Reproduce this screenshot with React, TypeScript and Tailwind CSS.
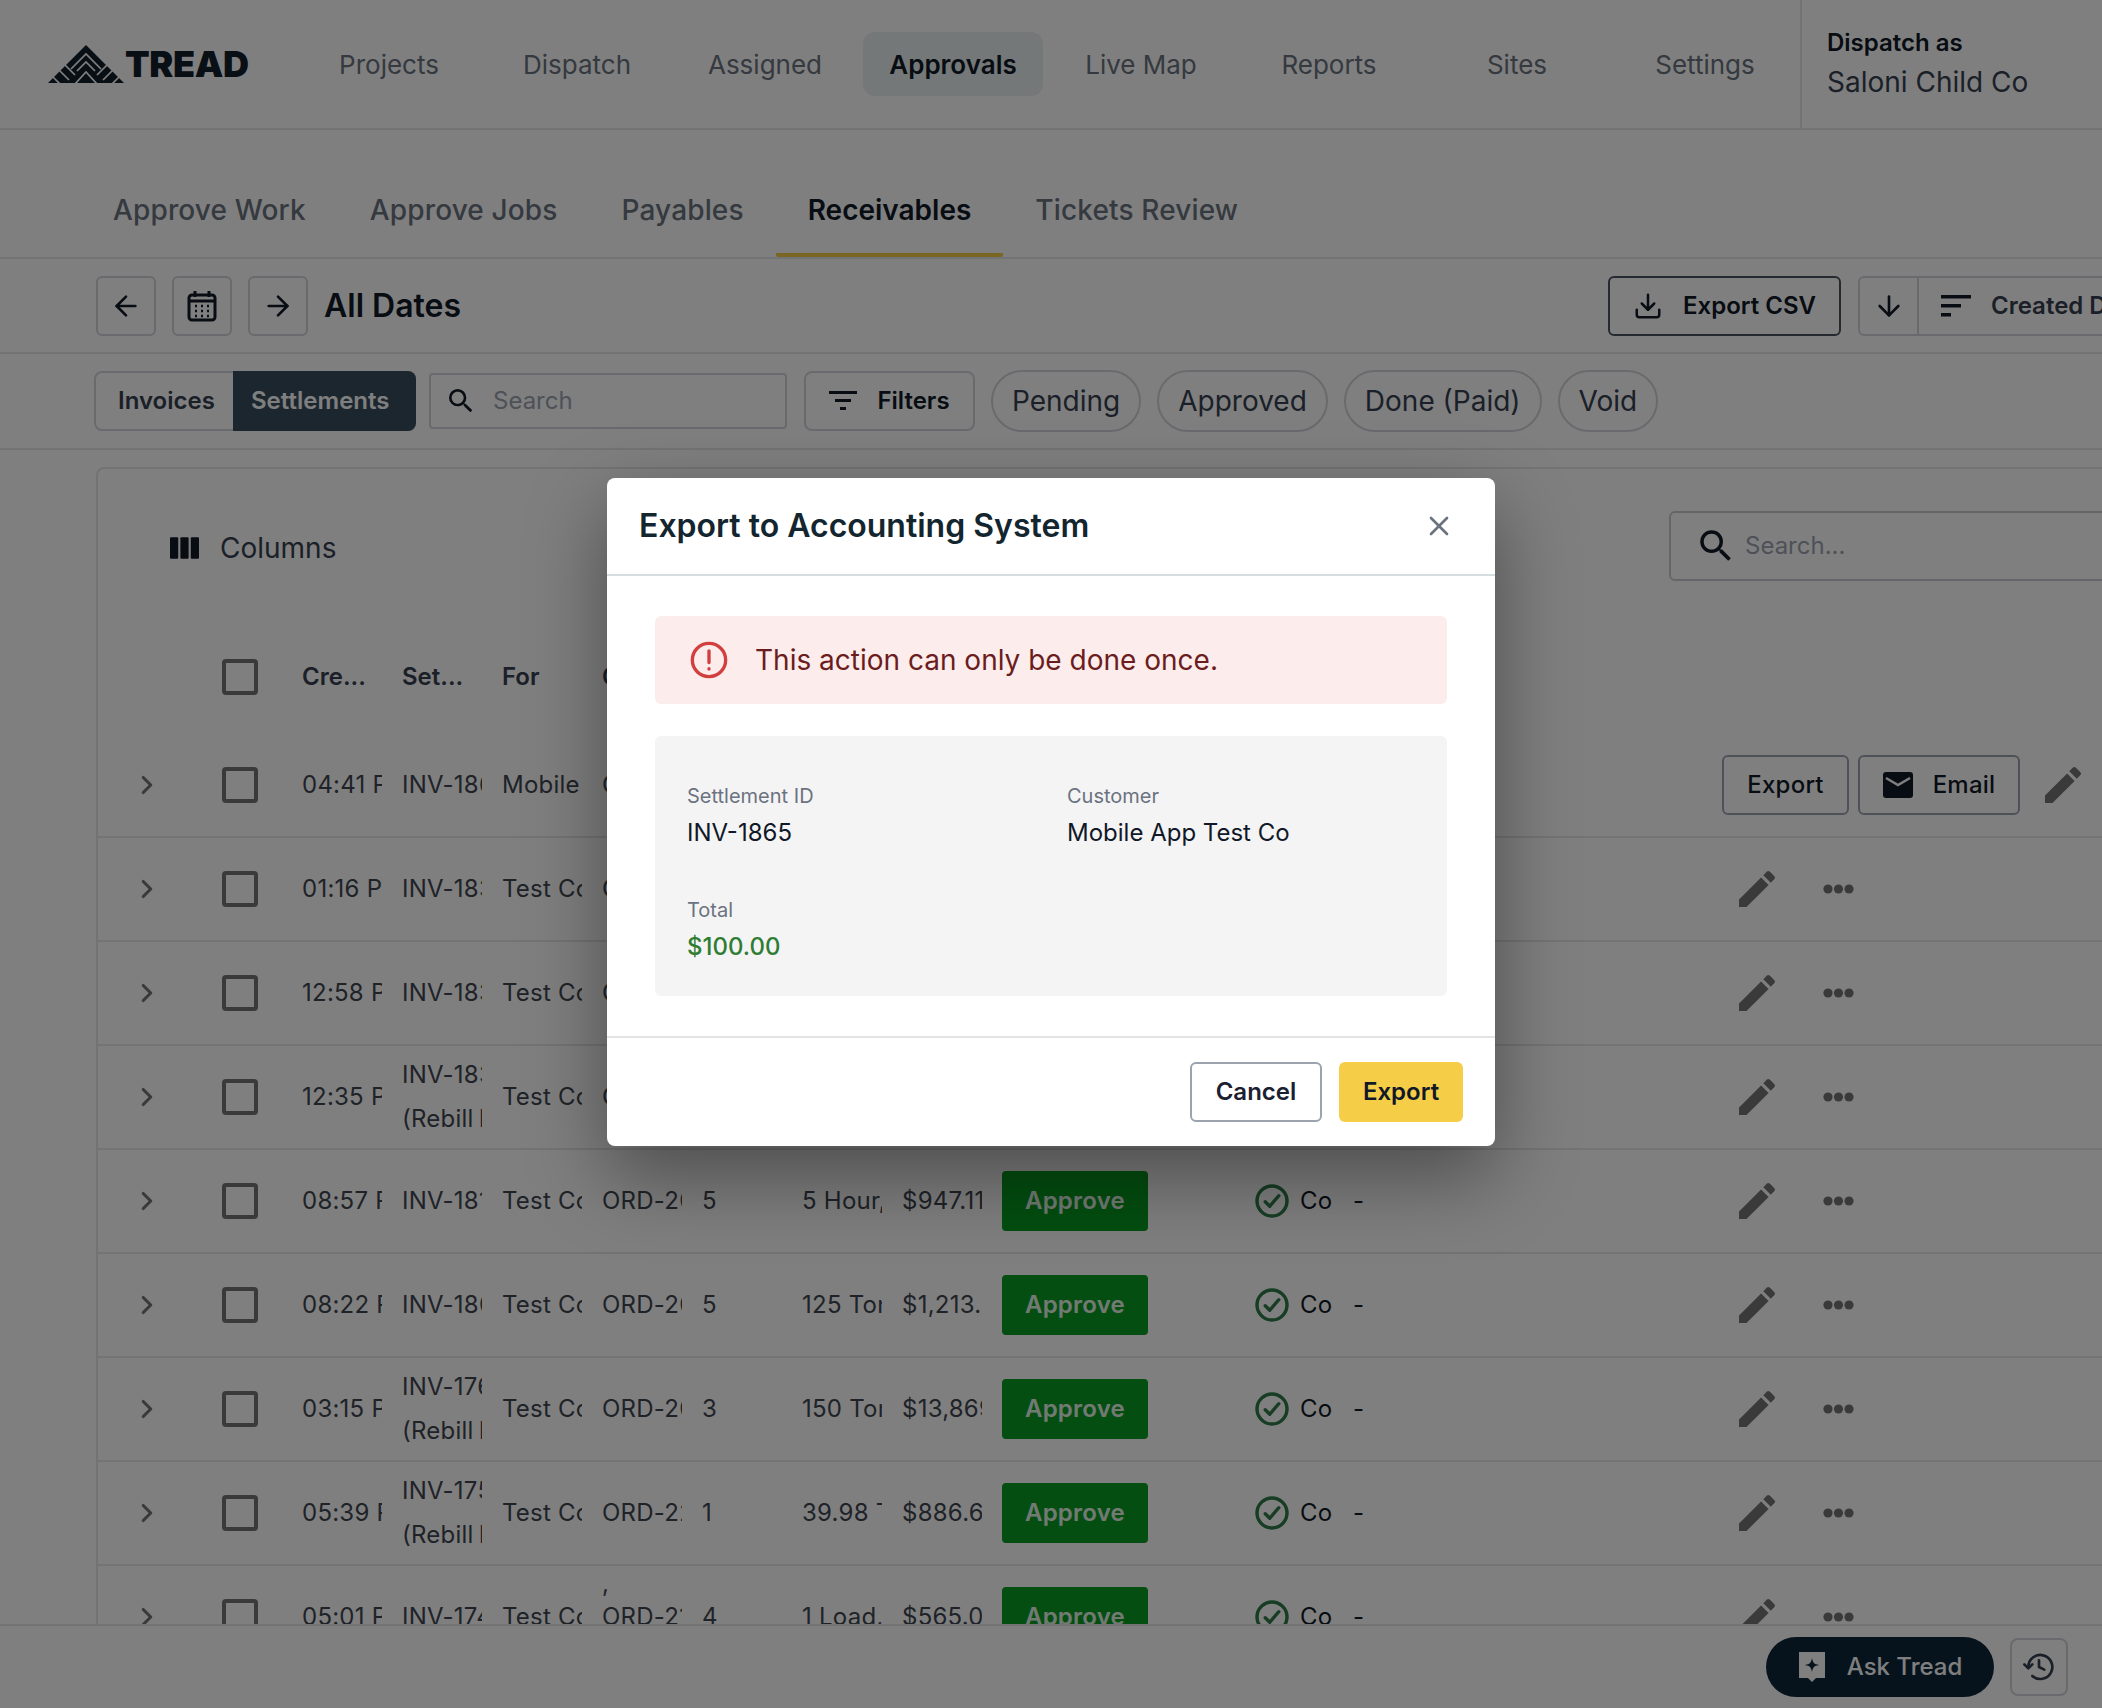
import { ArrowLeft, ArrowRight, ArrowDown, Download, X, ChevronRight } from 'lucide-react';

const navItems = ['Projects', 'Dispatch', 'Assigned', 'Approvals', 'Live Map', 'Reports', 'Sites', 'Settings'];
const tabs = ['Approve Work', 'Approve Jobs', 'Payables', 'Receivables', 'Tickets Review'];
const pills = ['Pending', 'Approved', 'Done (Paid)', 'Void'];

const rows = [
  { time: '04:41 PM', id: 'INV-1865', forName: 'Mobile App', order: 'ORD-2', n: '', qty: '', total: '', first: true },
  { time: '01:16 PM', id: 'INV-1832', forName: 'Test Co', order: 'ORD-2', n: '', qty: '', total: '' },
  { time: '12:58 PM', id: 'INV-1831', forName: 'Test Co', order: 'ORD-2', n: '', qty: '', total: '' },
  { time: '12:35 PM', id: 'INV-1830', rebill: true, forName: 'Test Co', order: 'ORD-2', n: '', qty: '', total: '' },
  { time: '08:57 PM', id: 'INV-1817', forName: 'Test Co', order: 'ORD-2046', n: '5', qty: '5 Hour, 2 Load', total: '$947.11', approve: true },
  { time: '08:22 PM', id: 'INV-1806', forName: 'Test Co', order: 'ORD-2041', n: '5', qty: '125 Tons', total: '$1,213.50', approve: true },
  { time: '03:15 PM', id: 'INV-1766', rebill: true, forName: 'Test Co', order: 'ORD-2011', n: '3', qty: '150 Tons', total: '$13,869.00', approve: true },
  { time: '05:39 PM', id: 'INV-1755', rebill: true, forName: 'Test Co', order: 'ORD-2231', n: '1', qty: '39.98 Tons', total: '$886.60', approve: true },
  { time: '05:01 PM', id: 'INV-1744', forName: 'Test Co', order: 'ORD-2177', n: '4', qty: '1 Load, 2 Tons', total: '$565.00', approve: true, comma: true },
];

const Logo = () => (
  <div className="flex items-center">
    <svg width="76" height="38" viewBox="0 0 76 38">
      <path d="M38 0 L76 38 L0 38 Z" fill="#13202b" />
      <g fill="none" stroke="#fff" strokeWidth="1.7">
        <path d="M23 24 L38 9 L53 24" />
        <path d="M29 26 L38 17 L47 26" />
        <path d="M27 39 L38 27 L49 39" />
        <path d="M16 19 L27 30" />
        <path d="M11 25 L21 35" />
        <path d="M5 32 L12 39" />
        <path d="M60 19 L49 30" />
        <path d="M65 25 L55 35" />
        <path d="M71 32 L64 39" />
      </g>
    </svg>
    <span className="ml-[1px] text-[36px] leading-none font-black text-[#13202b] tracking-[-0.01em]">TREAD</span>
  </div>
);

const SearchIcon = ({ size }: { size: number }) => (
  <svg width={size} height={size} viewBox="0 0 24 24" fill="#111827">
    <path d="M15.5 14h-.79l-.28-.27A6.47 6.47 0 0 0 16 9.5 6.5 6.5 0 1 0 9.5 16c1.61 0 3.09-.59 4.23-1.57l.27.28v.79l5 4.99L20.49 19l-4.99-5zm-6 0C7.01 14 5 11.99 5 9.5S7.01 5 9.5 5 14 7.01 14 9.5 11.99 14 9.5 14z" />
  </svg>
);

const CheckBox = () => <div className="w-[36px] h-[36px] shrink-0 rounded-[4px] border-[4px] border-[#757575]" />;

const PencilIcon = () => (
  <svg width="48" height="48" viewBox="0 0 24 24" fill="#757575">
    <path d="M3 17.25V21h3.75L17.81 9.94l-3.75-3.75L3 17.25zM20.71 7.04a1 1 0 0 0 0-1.41l-2.34-2.34a1 1 0 0 0-1.41 0l-1.83 1.83 3.75 3.75 1.83-1.83z" />
  </svg>
);

const Dots = () => (
  <svg width="31" height="10" viewBox="0 0 31 10" fill="#757575">
    <circle cx="5" cy="5" r="4.6" />
    <circle cx="15.5" cy="5" r="4.6" />
    <circle cx="26" cy="5" r="4.6" />
  </svg>
);

const CheckCircle = () => (
  <svg width="36" height="36" viewBox="0 0 24 24" fill="none" stroke="#2e7d4a" strokeWidth="2.3" strokeLinecap="round" strokeLinejoin="round">
    <circle cx="12" cy="12" r="10" />
    <path d="M7.5 12.5l3 3 6-7" />
  </svg>
);

const Cell = ({ children }: { children?: React.ReactNode }) => (
  <div className="w-[80px] shrink-0 overflow-hidden whitespace-nowrap">{children}</div>
);

const Row = ({ row }: { row: (typeof rows)[number] }) => (
  <div className="relative flex items-center h-[104px] shrink-0 border-b-2 border-[#e5e7eb] text-[24px] text-[#3f4650] tracking-[0.01em] pl-[34px]">
    <ChevronRight className="w-[30px] h-[30px] text-[#757575] shrink-0" strokeWidth={2.5} />
    <div className="ml-[60px] shrink-0">
      <CheckBox />
    </div>
    <div className="ml-[44px] flex items-center gap-[20px]">
      <Cell>{row.time}</Cell>
      <Cell>
        {row.rebill ? (
          <div className="leading-[44px]">
            <div>{row.id}</div>
            <div className="[word-spacing:-2px]">(Rebill Invoice)</div>
          </div>
        ) : (
          row.id
        )}
      </Cell>
      <Cell>{row.forName}</Cell>
      <Cell>
        {row.comma ? (
          <div className="relative h-[102px] flex items-center">
            <span className="absolute left-0 top-0">,</span>
            {row.order}
          </div>
        ) : (
          row.order
        )}
      </Cell>
      <Cell>{row.n}</Cell>
      <Cell>{row.qty}</Cell>
      <Cell>{row.total}</Cell>
    </div>
    {row.approve && (
      <div className="ml-[20px] flex items-center">
        <button className="w-[146px] h-[60px] rounded-[4px] bg-[#069c20] text-white/90 font-semibold text-[24px]">Approve</button>
        <div className="ml-[106px]">
          <CheckCircle />
        </div>
        <span className="ml-[10px] w-[34px] overflow-hidden text-[#111827]">Co</span>
        <span className="ml-[19px] text-[#111827]">-</span>
      </div>
    )}
    {row.first ? (
      <div className="absolute right-[15px] top-0 bottom-0 flex items-center">
        <button className="w-[127px] h-[60px] rounded-[6px] border-2 border-[#9ca3af] font-medium text-[#111827]">Export</button>
        <button className="ml-[9px] w-[162px] h-[60px] rounded-[6px] border-2 border-[#9ca3af] font-medium text-[#111827] flex items-center justify-center gap-[20px]">
          <svg width="30" height="26" viewBox="0 0 30 26" fill="#111827">
            <rect width="30" height="26" rx="3" />
            <path d="M3 6l12 7 12-7" fill="none" stroke="#fff" strokeWidth="2.5" />
          </svg>
          Email
        </button>
        <div className="ml-[19px]">
          <PencilIcon />
        </div>
      </div>
    ) : (
      <div className="absolute right-[248px] top-0 bottom-0 flex items-center gap-[42px]">
        <PencilIcon />
        <Dots />
      </div>
    )}
  </div>
);

const App = () => {
  return (
    <div className="relative w-[2102px] h-[1708px] overflow-hidden bg-white font-['Inter',sans-serif]">
      <div className="flex flex-col h-full">
        {/* Top nav */}
        <header className="flex h-[130px] shrink-0 border-b-2 border-[#e5e7eb]">
          <div className="w-[299px] shrink-0 pl-[48px] flex items-center">
            <Logo />
          </div>
          <nav className="flex items-center gap-[8px]">
            {navItems.map((item) => (
              <div
                key={item}
                className={
                  item === 'Approvals'
                    ? 'w-[180px] h-[64px] flex items-center justify-center rounded-[12px] bg-[#e9f0f1] text-[#111827] text-[26px] font-semibold'
                    : 'w-[180px] h-[64px] flex items-center justify-center text-[26px] text-[#6b7280]'
                }
              >
                {item}
              </div>
            ))}
          </nav>
          <div className="ml-[5px] pl-[25px] flex-1 border-l-2 border-[#e5e7eb] flex flex-col justify-center gap-[6px]">
            <div className="text-[24px] leading-[30px] font-semibold text-[#111827]">Dispatch as</div>
            <div className="text-[28px] leading-[36px] text-[#374151]">Saloni Child Co</div>
          </div>
        </header>

        {/* Sub tabs */}
        <div className="flex h-[129px] shrink-0 items-end border-b-2 border-[#e5e7eb] pl-[81px]">
          {tabs.map((tab) => (
            <div
              key={tab}
              className={
                tab === 'Receivables'
                  ? 'h-[96px] px-[32px] pt-[6px] flex items-center text-[28px] font-semibold text-[#111827] border-b-4 border-[#f4cb45] rounded-b-[2px]'
                  : 'h-[96px] px-[32px] pt-[6px] flex items-center text-[28px] tracking-[0.005em] font-medium text-[#6b7280] border-b-4 border-transparent'
              }
            >
              {tab}
            </div>
          ))}
        </div>

        {/* Date bar */}
        <div className="flex h-[95px] shrink-0 items-center border-b-2 border-[#e5e7eb] pl-[96px]">
          <div className="flex items-center gap-[16px] shrink-0">
            <button className="w-[60px] h-[60px] rounded-[6px] border-2 border-[#d1d5db] flex items-center justify-center">
              <ArrowLeft className="w-[32px] h-[32px] text-[#111827]" />
            </button>
            <button className="w-[60px] h-[60px] rounded-[6px] border-2 border-[#d1d5db] flex items-center justify-center">
              <svg width="30" height="32" viewBox="0 0 30 32" fill="none" stroke="#111827" strokeWidth="3">
                <rect x="2" y="5" width="26" height="25" rx="3" />
                <path d="M2 11h26M8 1v6M22 1v6" />
                <path d="M8 16h2M14 16h2M20 16h2M8 21h2M14 21h2M20 21h2M8 26h2M14 26h2M20 26h2" strokeWidth="2.5" />
              </svg>
            </button>
            <button className="w-[60px] h-[60px] rounded-[6px] border-2 border-[#d1d5db] flex items-center justify-center">
              <ArrowRight className="w-[32px] h-[32px] text-[#111827]" />
            </button>
          </div>
          <div className="ml-[16px] w-[138px] shrink-0 whitespace-nowrap text-[32px] font-semibold text-[#111827]">All Dates</div>
          <div className="ml-[1146px] flex items-center gap-[17px] shrink-0">
            <button className="w-[233px] h-[60px] rounded-[6px] border-2 border-[#4b5563] flex items-center justify-center gap-[20px] text-[24px] font-semibold text-[#111827]">
              <Download className="w-[30px] h-[30px]" />
              Export CSV
            </button>
            <div className="flex h-[60px] rounded-[6px] border-2 border-[#d1d5db] shrink-0">
              <div className="w-[59px] flex items-center justify-center border-r-2 border-[#d1d5db]">
                <ArrowDown className="w-[32px] h-[32px] text-[#111827]" />
              </div>
              <div className="flex items-center gap-[20px] pl-[22px] pr-[24px] text-[24px] font-semibold text-[#374151] whitespace-nowrap">
                <svg width="30" height="22" viewBox="0 0 30 22" fill="#111827">
                  <rect width="30" height="3.5" />
                  <rect y="9" width="20" height="3.5" />
                  <rect y="18" width="10" height="3.5" />
                </svg>
                Created Date
              </div>
            </div>
          </div>
        </div>

        {/* Filter bar */}
        <div className="flex h-[96px] shrink-0 items-center border-b-2 border-[#e5e7eb] pl-[94px] gap-[17px]">
          <div className="flex h-[60px] rounded-[8px] border-2 border-[#d1d5db] shrink-0">
            <div className="w-[137px] pl-[22px] flex items-center text-[24px] font-semibold text-[#374151]">Invoices</div>
            <div className="w-[183px] -my-[2px] -mr-[2px] pl-[18px] rounded-r-[8px] bg-[#374d5e] flex items-center text-[24px] font-semibold text-white">Settlements</div>
          </div>
          <div className="-ml-[4px] w-[358px] h-[56px] rounded-[4px] border-2 border-[#d1d5db] flex items-center pl-[14px] gap-[16px] text-[24px] text-[#9ca3af]">
            <SearchIcon size={32} />
            Search
          </div>
          <button className="w-[171px] h-[60px] rounded-[8px] border-2 border-[#d1d5db] flex items-center justify-center gap-[20px] text-[24px] font-semibold text-[#111827]">
            <svg width="28" height="20" viewBox="0 0 28 20" fill="#111827">
              <rect width="28" height="3" />
              <rect x="6" y="8" width="16" height="3" />
              <rect x="11" y="16" width="6" height="3" />
            </svg>
            Filters
          </button>
          {pills.map((pill) => (
            <div key={pill} className="-ml-[1px] h-[62px] px-[19px] rounded-full border-2 border-[#d1d5db] flex items-center text-[28px] text-[#374151]">
              {pill}
            </div>
          ))}
        </div>

        {/* Table card */}
        <div className="mt-[17px] ml-[96px] flex-1 min-h-0 overflow-hidden border-l-2 border-t-2 border-[#e5e7eb] rounded-tl-[8px]">
          <div className="relative h-[154px] pt-[4px] flex items-center pl-[72px]">
            <div className="flex items-center gap-[21px] text-[28px] text-[#374151]">
              <svg width="29" height="22" viewBox="0 0 30 22" fill="#111827">
                <rect width="8.5" height="22" rx="1" />
                <rect x="10.75" width="8.5" height="22" rx="1" />
                <rect x="21.5" width="8.5" height="22" rx="1" />
              </svg>
              Columns
            </div>
            <div className="absolute left-[1571px] top-[42px] w-[600px] h-[70px] rounded-[6px] border-2 border-[#c9cdd3] flex items-center pl-[24px] gap-[8px] text-[24px] text-[#9ca3af]">
              <SearchIcon size={42} />
              Search...
            </div>
          </div>
          <div className="h-[111px] pb-[3px] flex items-center pl-[124px] text-[24px] font-semibold text-[#374151]">
            <CheckBox />
            <div className="ml-[44px] flex items-center gap-[20px]">
              <Cell>Cre...</Cell>
              <Cell>Set...</Cell>
              <Cell>For</Cell>
              <Cell>Cus...</Cell>
            </div>
          </div>
          {rows.map((row) => (
            <Row key={row.time} row={row} />
          ))}
        </div>
      </div>

      {/* Footer */}
      <div className="absolute left-0 right-0 bottom-0 h-[84px] bg-white border-t-2 border-[#e5e7eb] flex items-center justify-end pr-[34px] gap-[16px]">
        <button className="w-[228px] h-[60px] rounded-full bg-[#0e2638] flex items-center justify-center gap-[21px] text-[24px] font-medium text-white">
          <svg width="28" height="32" viewBox="0 0 28 32">
            <path d="M1 1h26v26h-9l-4 4-4-4H1z" fill="#fff" />
            <path d="M14 7c1 5 2 6 7 7-5 1-6 2-7 7-1-5-2-6-7-7 5-1 6-2 7-7z" fill="#0e2638" />
          </svg>
          Ask Tread
        </button>
        <button className="w-[58px] h-[58px] rounded-[8px] border-2 border-[#d1d5db] flex items-center justify-center">
          <svg width="32" height="32" viewBox="0 0 24 24" fill="none" stroke="#374151" strokeWidth="2" strokeLinecap="round" strokeLinejoin="round">
            <path d="M4 12a9 9 0 1 1 3 6.7" />
            <path d="M1 10l3 3 3-3" />
            <path d="M12 7v5l4 2" />
          </svg>
        </button>
      </div>

      {/* Backdrop and modal */}
      <div className="absolute inset-0 bg-black/50" />
      <div className="absolute left-[607px] top-[478px] w-[888px] h-[668px] bg-white rounded-[8px] shadow-[0_30px_80px_rgba(0,0,0,0.4)] flex flex-col">
        <div className="h-[98px] shrink-0 border-b-2 border-[#d5dde0] flex items-center justify-between pl-[32px] pr-[40px]">
          <div className="text-[32px] font-semibold text-[#13262f]">Export to Accounting System</div>
          <X className="w-[32px] h-[32px] text-[#6b7280]" />
        </div>
        <div className="flex-1 px-[48px] pt-[40px]">
          <div className="h-[88px] rounded-[6px] bg-[#fdecec] flex items-center pl-[34px] gap-[26px] text-[28px] text-[#6b1d1d]">
            <svg width="40" height="40" viewBox="0 0 24 24" fill="none" stroke="#d13f3f" strokeWidth="2" strokeLinecap="round">
              <circle cx="12" cy="12" r="10" />
              <path d="M12 6.5v7" />
              <path d="M12 17.2v.2" />
            </svg>
            This action can only be done once.
          </div>
          <div className="mt-[32px] h-[260px] rounded-[6px] bg-[#f4f4f5] px-[32px] pt-[46px] grid grid-cols-2 gap-x-[32px] content-start">
            <div>
              <div className="text-[20px] text-[#6b7280] leading-[28px]">Settlement ID</div>
              <div className="mt-[6px] text-[24px] text-[#111827] leading-[34px]">INV-1865</div>
            </div>
            <div>
              <div className="text-[20px] text-[#6b7280] leading-[28px]">Customer</div>
              <div className="mt-[6px] text-[24px] text-[#111827] leading-[34px]">Mobile App Test Co</div>
            </div>
            <div className="mt-[46px]">
              <div className="text-[20px] text-[#6b7280] leading-[28px]">Total</div>
              <div className="mt-[6px] text-[24px] text-[#2e7d32] font-medium leading-[34px]">$100.00</div>
            </div>
          </div>
        </div>
        <div className="h-[110px] shrink-0 border-t-2 border-[#e2e4e6] flex items-center justify-end pr-[32px] gap-[17px]">
          <button className="w-[132px] h-[60px] rounded-[6px] border-2 border-[#9ca3af] text-[24px] font-semibold text-[#1a2030]">Cancel</button>
          <button className="w-[124px] h-[60px] rounded-[6px] bg-[#f6cd47] text-[24px] font-semibold text-[#111827]">Export</button>
        </div>
      </div>
    </div>
  );
};

export default App;
